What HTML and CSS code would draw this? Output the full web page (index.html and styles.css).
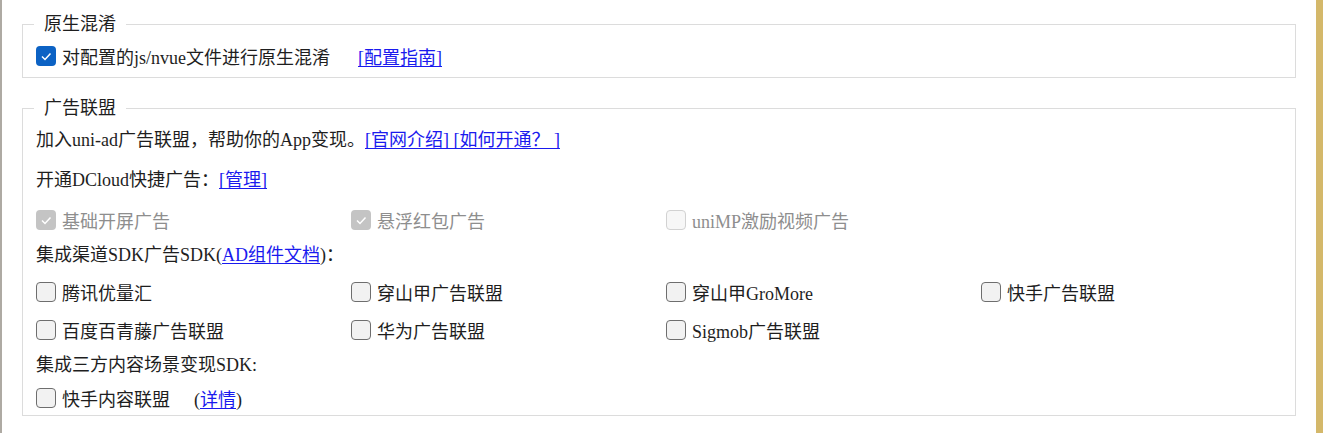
FILE: index.html
```html
<!DOCTYPE html>
<html lang="zh-CN">
<head>
  <meta charset="UTF-8">
  <meta name="viewport" content="width=device-width, initial-scale=1.0">
  <title>App模块配置</title>
  <link rel="stylesheet" href="styles.css">
</head>
<body>
  <div class="page">
    <div class="edge-left"></div>

    <div class="main">
      <!-- 原生混淆 -->
      <fieldset class="group group-confuse">
        <legend>原生混淆</legend>
        <div class="opts row-confuse">
          <label class="check">
            <span class="box on"><svg viewBox="0 0 20 20"><path d="M6 10.5 L9 13.5 L14.5 7.5"/></svg></span>
            对配置的js/nvue文件进行原生混淆
          </label>
          <a class="link guide" href="#">[配置指南]</a>
        </div>
      </fieldset>

      <!-- 广告联盟 -->
      <fieldset class="group group-ad">
        <legend>广告联盟</legend>

        <div class="line row-a">加入uni-ad广告联盟，帮助你的App变现。<a class="link" href="#">[官网介绍]&nbsp;[如何开通？ ]</a></div>
        <div class="line row-b">开通DCloud快捷广告：<a class="link" href="#">[管理]</a></div>

        <div class="grid row-c">
          <label class="check disabled">
            <span class="box on"><svg viewBox="0 0 20 20"><path d="M6 10.5 L9 13.5 L14.5 7.5"/></svg></span>
            基础开屏广告
          </label>
          <label class="check disabled">
            <span class="box on"><svg viewBox="0 0 20 20"><path d="M6 10.5 L9 13.5 L14.5 7.5"/></svg></span>
            悬浮红包广告
          </label>
          <label class="check disabled">
            <span class="box"></span>
            uniMP激励视频广告
          </label>
        </div>

        <div class="line row-d">集成渠道SDK广告SDK(<a class="link" href="#">AD组件文档</a>)：</div>

        <div class="grid row-e">
          <label class="check"><span class="box"></span>腾讯优量汇</label>
          <label class="check"><span class="box"></span>穿山甲广告联盟</label>
          <label class="check"><span class="box"></span>穿山甲GroMore</label>
          <label class="check"><span class="box"></span>快手广告联盟</label>
        </div>

        <div class="grid row-f">
          <label class="check"><span class="box"></span>百度百青藤广告联盟</label>
          <label class="check"><span class="box"></span>华为广告联盟</label>
          <label class="check"><span class="box"></span>Sigmob广告联盟</label>
        </div>

        <div class="line row-g">集成三方内容场景变现SDK:</div>

        <div class="opts row-h">
          <label class="check"><span class="box"></span>快手内容联盟</label>
          <span class="detail">(<a class="link" href="#">详情</a>)</span>
        </div>
      </fieldset>
    </div>

    <div class="edge-right"></div>
  </div>
</body>
</html>
```

FILE: styles.css
```css
html, body {
  margin: 0;
  padding: 0;
  background-color: #fff;
}

body {
  font-family: "Liberation Serif", "Noto Sans CJK SC", serif;
  font-size: 18px;
  color: #1e1e1e;
}

.page {
  display: flex;
  height: 433px;
  overflow: hidden;
}

.edge-left {
  flex-shrink: 0;
  width: 2px;
  background-color: #aeaaa3;
}

.edge-right {
  flex-shrink: 0;
  width: 7px;
  background-color: #d4b86a;
}

.main {
  flex: 1;
  min-width: 0;
  padding: 14px 20px 0;
}

.group {
  min-width: 0;
  margin: 0;
  padding: 0 13px;
  border: 1px solid #dcdcdc;
}

.group legend {
  margin-left: -2px;
  padding: 0 10px;
  line-height: 20px;
  height: 20px;
}

.group-confuse {
  padding-top: 6px;
  padding-bottom: 5px;
}

.group-ad {
  margin-top: 20px;
  padding-top: 4px;
  padding-bottom: 1px;
}

.line {
  white-space: nowrap;
}

.opts {
  display: flex;
  align-items: center;
  white-space: nowrap;
}

.grid {
  display: grid;
  grid-template-columns: repeat(4, 315px);
  align-items: center;
  white-space: nowrap;
}

.row-confuse { height: 32px; }
.row-a { height: 36px; line-height: 36px; }
.row-b { height: 44px; line-height: 44px; }
.row-c { height: 36px; }
.row-d { height: 34px; line-height: 34px; }
.row-e { height: 40px; }
.row-f { height: 36px; }
.row-g { height: 34px; line-height: 34px; }
.row-h { height: 32px; }

.link {
  color: #1a1aee;
  text-decoration: underline;
  text-underline-offset: 2px;
}

.guide {
  margin-left: 28px;
}

.detail {
  margin-left: 24px;
}

.check {
  display: flex;
  align-items: center;
}

.box {
  box-sizing: border-box;
  width: 20px;
  height: 20px;
  margin-right: 6px;
  border: 1px solid #6e6e6e;
  border-radius: 4px;
  background-color: #f2f2f2;
  flex-shrink: 0;
}

.box svg {
  display: block;
  width: 100%;
  height: 100%;
}

.box svg path {
  fill: none;
  stroke: #fff;
  stroke-width: 1.5;
}

.box.on {
  border: none;
  background-color: #0c62c4;
}

.check.disabled {
  color: #8e8e8e;
}

.check.disabled .box {
  border-color: #d2d2d2;
  background-color: #f7f7f7;
}

.check.disabled .box.on {
  background-color: #c4c4c4;
}
```
